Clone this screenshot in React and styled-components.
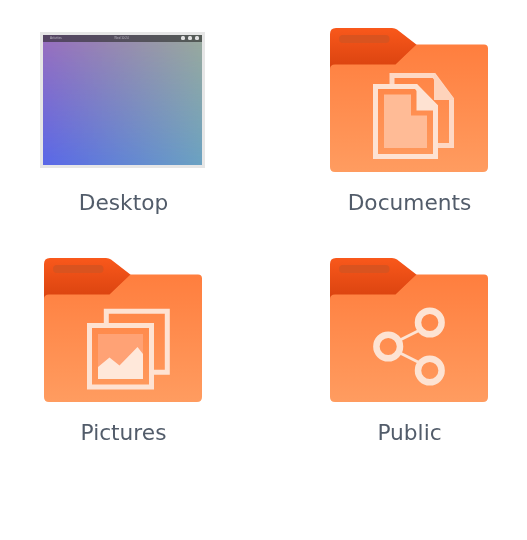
import React from "react";
import styled, { createGlobalStyle } from "styled-components";

const Global = createGlobalStyle`
  html, body {
    margin: 0;
    background: #fff;
  }
`;

const Grid = styled.div`
  display: grid;
  grid-template-columns: 200px 200px;
  column-gap: 86px;
  row-gap: 40px;
  padding: 27.5px 0 0 22.5px;
  height: 540px;
  box-sizing: border-box;
  overflow: hidden;
  align-content: start;
`;

const Item = styled.div`
  display: flex;
  flex-direction: column;
  align-items: center;
`;

const IconBox = styled.div`
  height: 144px;
  display: flex;
  align-items: center;
  justify-content: center;
`;

const Label = styled.div`
  margin: 16px 0 0 2px;
  font-family: "DejaVu Sans", "Noto Sans", sans-serif;
  font-size: 21.7px;
  line-height: 30px;
  color: #525c6a;
  filter: blur(0.35px);
`;

const Thumb = styled.div`
  width: 159px;
  height: 130px;
  border: 3px solid #e6e6e6;
  position: relative;
  background: linear-gradient(to right, #5a68e8, #6ba2c2);
  filter: blur(0.5px);

  &::before {
    content: "";
    position: absolute;
    inset: 0;
    background: linear-gradient(to right, #9a6fbd, #9aa99c);
    mask-image: linear-gradient(to bottom, #000, transparent);
  }
`;

const TopBar = styled.div`
  position: relative;
  height: 7.5px;
  padding: 0 3px 0 7px;
  display: flex;
  align-items: center;
  justify-content: space-between;
  background: rgba(40, 40, 40, 0.6);
  font-family: "Liberation Sans", sans-serif;
  font-size: 3px;
  color: #b9b5c0;
`;

const Dots = styled.div`
  display: flex;
  gap: 3px;
`;

const Dot = styled.span`
  width: 4px;
  height: 4px;
  border-radius: 1.5px;
  background: #e2e2e2;
`;

const FolderSvg = styled.svg`
  display: block;
  filter: blur(0.4px);
`;

const Folder = ({ id, children }) => (
  <FolderSvg width="158" height="144" viewBox="0 0 158 144">
    <defs>
      <linearGradient id={`tab-${id}`} x1="0" y1="0" x2="0" y2="1">
        <stop offset="0" stopColor="#f9581b" />
        <stop offset="1" stopColor="#d8420f" />
      </linearGradient>
      <linearGradient id={`body-${id}`} x1="0" y1="0" x2="0" y2="1">
        <stop offset="0" stopColor="#ff7e3e" />
        <stop offset="1" stopColor="#ff9c60" />
      </linearGradient>
    </defs>
    <path d="M0 42V6Q0 0 6 0H62Q65 0 67 1.6L87 17L66 37H10L0 42Z" fill={`url(#tab-${id})`} />
    <rect x="9" y="7" width="50.5" height="8" rx="4" fill="#d9531f" />
    <path
      d="M0 41Q0 36.5 5 36.5H65.5L86.5 16.5H154Q158 16.5 158 20.5V139Q158 144 153 144H5Q0 144 0 139Z"
      fill={`url(#body-${id})`}
    />
    {children}
  </FolderSvg>
);

const DocsGlyph = () => (
  <g>
    <path d="M62 56V47.5H104L121.5 71V117.5H108" fill="none" stroke="#fed8c4" strokeWidth="5" />
    <path d="M104 45L124 71V72H104Z" fill="#fed3bb" />
    <path d="M45.5 58.5H86L105.5 78.5V128.5H45.5Z" fill="none" stroke="#fee2d2" strokeWidth="5" />
    <path d="M86.5 56L108 77.5V82.5H86.5Z" fill="#fee2d2" />
    <path d="M54 66.5H81V87.5H97V120H54Z" fill="#ffbb96" />
  </g>
);

const PicsGlyph = () => (
  <g>
    <path d="M62.3 65V53.3H123.3V114.3H110" fill="none" stroke="#fee2d2" strokeWidth="5" />
    <rect x="45.5" y="67.5" width="62" height="61.5" fill="none" stroke="#fee2d2" strokeWidth="5" />
    <rect x="54" y="76" width="45" height="45" fill="#ffa275" />
    <path d="M54 121V109L65.5 99.5L75.5 107.5L93.5 89L99 96V121Z" fill="#ffe8da" />
  </g>
);

const ShareGlyph = () => (
  <g fill="none" stroke="#fde3d3">
    <path d="M66 84L90 72M66 93L90 105" strokeWidth="3" />
    <circle cx="99.8" cy="64.5" r="11.8" strokeWidth="6.5" />
    <circle cx="58.2" cy="88.5" r="11.8" strokeWidth="6.5" />
    <circle cx="99.8" cy="112.5" r="11.8" strokeWidth="6.5" />
  </g>
);

export default function App() {
  return (
    <>
      <Global />
      <Grid>
        <Item>
          <IconBox>
            <Thumb>
              <TopBar>
                <span>Activities</span>
                <span>Wed 10:24</span>
                <Dots>
                  <Dot />
                  <Dot />
                  <Dot />
                </Dots>
              </TopBar>
            </Thumb>
          </IconBox>
          <Label>Desktop</Label>
        </Item>
        <Item>
          <IconBox>
            <Folder id="docs">
              <DocsGlyph />
            </Folder>
          </IconBox>
          <Label>Documents</Label>
        </Item>
        <Item>
          <IconBox>
            <Folder id="pics">
              <PicsGlyph />
            </Folder>
          </IconBox>
          <Label>Pictures</Label>
        </Item>
        <Item>
          <IconBox>
            <Folder id="pub">
              <ShareGlyph />
            </Folder>
          </IconBox>
          <Label>Public</Label>
        </Item>
      </Grid>
    </>
  );
}
